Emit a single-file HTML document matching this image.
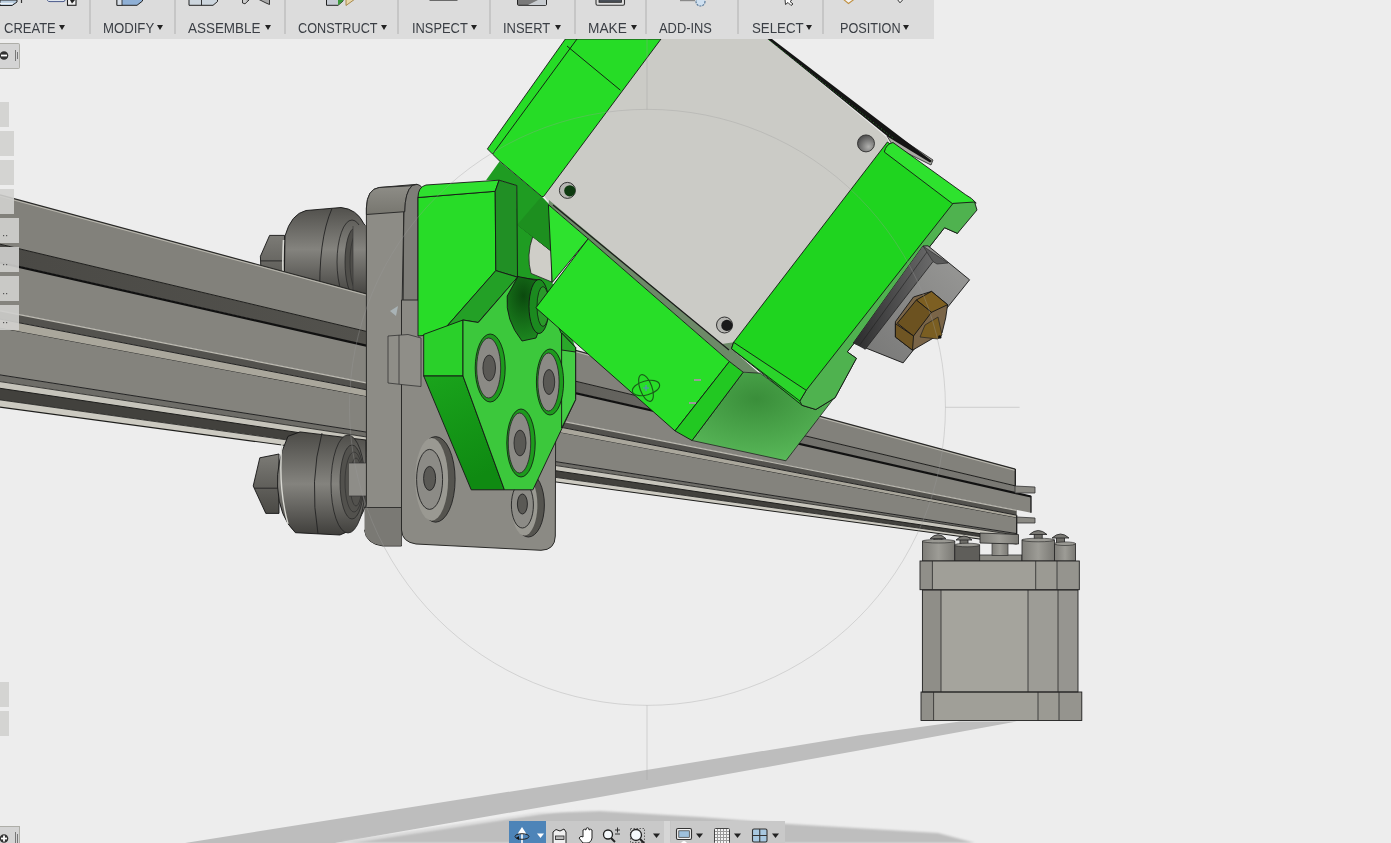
<!DOCTYPE html>
<html><head><meta charset="utf-8">
<style>
html,body{margin:0;padding:0;}
body{width:1391px;height:843px;overflow:hidden;background:#ededed;position:relative;font-family:"Liberation Sans",sans-serif;}
#scene{position:absolute;left:0;top:0;}
#tb{position:absolute;left:0;top:0;width:934px;height:39px;background:#dcdcdc;}
.sep{position:absolute;top:0;width:1.6px;height:34px;background:#c6c6c6;}
.lbl{position:absolute;top:20px;font-size:14px;line-height:16px;color:#3a3e44;white-space:nowrap;transform-origin:0 0;}
.tri{position:absolute;top:25px;width:0;height:0;border-left:3.5px solid transparent;border-right:3.5px solid transparent;border-top:5.5px solid #222;}
.pnl{position:absolute;left:0;background:rgba(208,208,206,0.9);}
</style></head><body>
<svg id="scene" width="1391" height="843" viewBox="0 0 1391 843">
<defs>
<linearGradient id="wg" x1="0" y1="0" x2="0" y2="1"><stop offset="0" stop-color="#5c5b57"/><stop offset="0.45" stop-color="#8a8984"/><stop offset="1" stop-color="#4e4d49"/></linearGradient>
<linearGradient id="wgt" gradientUnits="userSpaceOnUse" x1="0" y1="208" x2="0" y2="300"><stop offset="0" stop-color="#52514d"/><stop offset="0.45" stop-color="#84837e"/><stop offset="1" stop-color="#3e3d3a"/></linearGradient>
<linearGradient id="wgb" gradientUnits="userSpaceOnUse" x1="0" y1="432" x2="0" y2="536"><stop offset="0" stop-color="#4c4b47"/><stop offset="0.5" stop-color="#84837e"/><stop offset="1" stop-color="#3e3d3a"/></linearGradient>
<linearGradient id="slotg" gradientUnits="userSpaceOnUse" x1="0" y1="0" x2="1015" y2="0"><stop offset="0" stop-color="#4a4945"/><stop offset="0.45" stop-color="#55544f"/><stop offset="0.7" stop-color="#6d6c67"/><stop offset="1" stop-color="#7a7974"/></linearGradient>
<linearGradient id="ptop" x1="0" y1="0" x2="0" y2="1"><stop offset="0" stop-color="#8e8d87"/><stop offset="1" stop-color="#77766f"/></linearGradient>
<linearGradient id="sg" x1="0" y1="0" x2="1" y2="0"><stop offset="0" stop-color="#7e7d78"/><stop offset="0.5" stop-color="#9d9c96"/><stop offset="1" stop-color="#7a7974"/></linearGradient>
<linearGradient id="dsg" x1="0" y1="0" x2="0.3" y2="1"><stop offset="0" stop-color="#1aa41c"/><stop offset="1" stop-color="#0f8a12"/></linearGradient>
<linearGradient id="ng" x1="0" y1="0" x2="0" y2="1"><stop offset="0" stop-color="#7c7b76"/><stop offset="1" stop-color="#4a4945"/></linearGradient>
<radialGradient id="dg" cx="0.45" cy="0.3" r="0.75"><stop offset="0" stop-color="#3a8e3a"/><stop offset="1" stop-color="#5aba5a"/></radialGradient>
<linearGradient id="hg" x1="0" y1="0" x2="1" y2="0"><stop offset="0" stop-color="#2c2c2d"/><stop offset="1" stop-color="#6a6a6a"/></linearGradient>
<radialGradient id="bossg" cx="0.4" cy="0.3" r="0.8"><stop offset="0" stop-color="#0b4a0e"/><stop offset="1" stop-color="#1f8f22"/></radialGradient>
</defs>
<polygon points="185,843 488,795 600,777.6 860,735.2 960,721.6 1016.7,721.6 860,750.3 600,797 335,843" fill="#bdbdbd"/>
<defs><filter id="blur1" x="-5%" y="-50%" width="110%" height="200%"><feGaussianBlur stdDeviation="1.2"/></filter></defs>
<polygon points="335,843 450,826 540,813 600,811 700,817 785,823.7 938,833 975,843" fill="#bebebe" filter="url(#blur1)"/>
<line x1="344" y1="843" x2="575" y2="808" stroke="#ececec" stroke-width="2.2" stroke-opacity="0.8" filter="url(#blur1)"/>
<path d="M260.4,256.3 L269.6,235.4 L284.6,235.4 L284.6,300 L262,300 Z" fill="url(#ng)" stroke="#151515" stroke-width="0.9"/><line x1="261" y1="260.9" x2="284.6" y2="260.9" stroke="#222" stroke-width="0.9"/><path d="M285,236 Q291,214 306,210.5 L341,207.5 Q357,209 364,224 L366,226 L366,300 L284,300 Z" fill="url(#wgt)" stroke="#151515" stroke-width="0.9"/><path d="M283.5,240 Q282,270 284,300" fill="none" stroke="#d8d8d2" stroke-width="1.6"/><path d="M332,208.5 Q318,240 320,300" fill="none" stroke="#222" stroke-width="0.9"/><ellipse cx="352" cy="262" rx="15" ry="42" fill="url(#wgt)" stroke="#222" stroke-width="0.8"/><ellipse cx="355" cy="262" rx="10" ry="34" fill="#4f4e4a" stroke="#222" stroke-width="0.7"/><ellipse cx="357" cy="262" rx="7" ry="28" fill="none" stroke="#2a2a2a" stroke-width="0.6"/><rect x="353" y="225" width="13" height="75" fill="url(#wgt)"/><line x1="353" y1="226" x2="353" y2="300" stroke="#333" stroke-width="0.6"/>
<polygon points="0.0,194.9 1015.3,469.1 1015.3,485.9 0.0,244.2" fill="#82817b" />
<line x1="0.0" y1="194.9" x2="1015.3" y2="469.1" stroke="#2a2a28" stroke-width="1.2"/>
<line x1="0.0" y1="196.3" x2="1015.3" y2="470.5" stroke="#b9b7ae" stroke-width="1"/>
<polygon points="0.0,244.2 1015.3,485.9 1015.3,492.5 0.0,262.0" fill="url(#slotg)" />
<line x1="0.0" y1="244.2" x2="1015.3" y2="485.9" stroke="#1e1e1c" stroke-width="1"/>
<polygon points="0.0,262.0 1031.0,496.0 1031.0,512.7 0.0,310.3" fill="#85847e" />
<line x1="0.0" y1="262.5" x2="1031.0" y2="496.5" stroke="#111" stroke-width="2.2"/>
<polygon points="0.0,310.3 1016.7,509.9 1016.7,515.2 0.0,319.1" fill="#53524e" />
<line x1="0.0" y1="310.9" x2="1016.7" y2="510.5" stroke="#bdbbb2" stroke-width="1.2"/>
<polygon points="0.0,319.1 1016.7,515.2 1016.7,518.0 0.0,328.3" fill="#aaa79c" />
<line x1="0.0" y1="319.1" x2="1016.7" y2="515.2" stroke="#222" stroke-width="1"/>
<line x1="0.0" y1="328.3" x2="1016.7" y2="518.0" stroke="#2a2a28" stroke-width="1"/>
<polygon points="0.0,328.3 1016.7,518.0 1016.7,533.6 0.0,374.9" fill="#84837d" />
<polygon points="0.0,374.9 1016.7,533.6 1016.7,535.2 0.0,381.6" fill="#6e6d68" />
<line x1="0.0" y1="374.9" x2="1016.7" y2="533.6" stroke="#222" stroke-width="1"/>
<polygon points="0.0,381.6 1016.7,535.2 1016.7,539.1 0.0,388.3" fill="#c6c4bb" />
<line x1="0.0" y1="381.6" x2="1016.7" y2="535.2" stroke="#2a2a28" stroke-width="0.9"/>
<polygon points="0.0,388.3 1016.7,539.1 1016.7,541.7 0.0,399.9" fill="#42413d" />
<line x1="0.0" y1="388.3" x2="1016.7" y2="539.1" stroke="#1e1e1c" stroke-width="1"/>
<polygon points="0.0,399.9 1016.7,541.7 1016.7,544.0 0.0,407.1" fill="#cccac1" />
<line x1="0.0" y1="399.9" x2="1016.7" y2="541.7" stroke="#2a2a28" stroke-width="0.9"/>
<line x1="0.0" y1="407.1" x2="1016.7" y2="544.0" stroke="#1e1e1c" stroke-width="1.1"/>
<polygon points="1015.3,469.1 1015.3,485.9 1031.0,496.0 1031.0,512.7 1016.7,515.2 1016.7,544.0" fill="none" />
<line x1="1015.3" y1="469.1" x2="1015.3" y2="485.9" stroke="#1a1a1a" stroke-width="1.3"/>
<line x1="1031.0" y1="496.0" x2="1031.0" y2="512.7" stroke="#1a1a1a" stroke-width="1.3"/>
<line x1="1016.7" y1="515.2" x2="1016.7" y2="544.0" stroke="#1a1a1a" stroke-width="1.3"/>
<polygon points="1015.0,486.0 1035.0,487.0 1035.0,493.0 1015.0,493.0" fill="#8a8983" stroke="#333" stroke-width="0.8"/>
<polygon points="1017.0,517.0 1035.0,518.0 1035.0,523.0 1017.0,523.0" fill="#8a8983" stroke="#333" stroke-width="0.8"/>
<path d="M253.2,486 L259.8,457.8 L279,454 L279,513.4 L265.8,513.4 Z" fill="url(#ng)" stroke="#151515" stroke-width="0.9"/><line x1="254" y1="488.2" x2="279" y2="488.2" stroke="#222" stroke-width="0.9"/><path d="M288,436.3 Q276,462 277.6,487 Q279,517 295.4,532.7 L339.9,535 Q356,530 363,512 L366,505 L366,440 L300,431.9 Z" fill="url(#wgb)" stroke="#151515" stroke-width="0.9"/><path d="M282,444 Q278,487 288,524" fill="none" stroke="#d8d8d2" stroke-width="1.4"/><path d="M322,433 Q309,480 318,534" fill="none" stroke="#222" stroke-width="0.9"/><ellipse cx="348" cy="484" rx="17" ry="49" fill="url(#wgb)" stroke="#222" stroke-width="0.8"/><ellipse cx="352" cy="482" rx="12" ry="37" fill="#52514d" stroke="#222" stroke-width="0.7"/><ellipse cx="354" cy="482" rx="9" ry="30" fill="none" stroke="#2a2a2a" stroke-width="0.6"/><ellipse cx="356" cy="482" rx="6" ry="24" fill="none" stroke="#2a2a2a" stroke-width="0.6"/><rect x="349" y="463" width="17" height="33" fill="#8e8d88"/><line x1="349" y1="463" x2="366" y2="463" stroke="#333" stroke-width="0.7"/><line x1="349" y1="496" x2="366" y2="496" stroke="#333" stroke-width="0.7"/>
<path d="M366.4,530 L366.4,208 Q367,189 379.2,187.5 L417,184.3 L418,336 L401.5,336 L401.5,546 L383,546 Q366,544 364.5,530 Z" fill="#8d8c86" stroke="#2a2a28" stroke-width="1"/>
<path d="M366.4,214.5 L366.4,208 Q367,189 379.2,187.5 L412,185.7 Q405,192 404.8,211.7 Z" fill="url(#ptop)" stroke="#222" stroke-width="0.9"/>
<path d="M404.8,211.7 Q405,192 412,185.7 L417,184.3 Q421,185 422,188 L418,197.5 L418,336 L401.5,336 L403.8,212 Z" fill="#7e7d78" stroke="#222" stroke-width="0.9"/>
<line x1="403.8" y1="212" x2="401.5" y2="545" stroke="#2a2a28" stroke-width="0.9"/>
<path d="M364.5,507.5 L401.5,507.5 L401.5,545.5 L383,545.5 Q366,543.5 364.5,530 Z" fill="#7a7974"/>
<line x1="364" y1="507.5" x2="401.5" y2="507.5" stroke="#2a2a28" stroke-width="0.9"/>
<path d="M401.5,300 L556,300 L555.3,536 Q555,550 541,550.3 L416,544 Q402,542 401.5,530 Z" fill="#8b8a84" stroke="#2a2a28" stroke-width="1"/>
<polygon points="388,336 408,334.5 421,338 421,386.5 406,385 388,383" fill="#8f8e88" stroke="#333" stroke-width="0.8"/>
<line x1="399" y1="335" x2="399" y2="384" stroke="#333" stroke-width="0.8"/>
<polygon points="390,311 398,306 396,316" fill="#a9b3b6"/>
<ellipse cx="435.6" cy="479.4" rx="19.5" ry="42.8" fill="#55544f" stroke="#222" stroke-width="0.9"/><ellipse cx="431.6" cy="479.4" rx="16.5" ry="41.3" fill="#9a9992"/><ellipse cx="429.6" cy="479.4" rx="13.0" ry="30.0" fill="#8c8b86" stroke="#222" stroke-width="0.9"/><ellipse cx="429.6" cy="478.4" rx="6.0" ry="12.0" fill="#5a5955" stroke="#222" stroke-width="0.9"/>
<ellipse cx="528.4" cy="505.0" rx="16.0" ry="32.0" fill="#55544f" stroke="#222" stroke-width="0.9"/><ellipse cx="524.4" cy="505.0" rx="13.0" ry="30.5" fill="#9a9992"/><ellipse cx="522.4" cy="505.0" rx="11.0" ry="23.0" fill="#8c8b86" stroke="#222" stroke-width="0.9"/><ellipse cx="522.4" cy="504.0" rx="5.0" ry="10.0" fill="#5a5955" stroke="#222" stroke-width="0.9"/>
<polygon points="486.0,180.2 499.5,161.5 541.5,196.5 548.7,204.0 552.2,282.5 560.0,300.0 575.0,347.0 520.0,340.0 505.0,300.0 517.0,277.0 516.8,185.5 499.0,180.2" fill="#1f9c22" />
<path d="M532.8,236.4 L551.8,251.6 L551.8,282 L531,273.4 Q526,255 532.8,236.4 Z" fill="#cfcec8" stroke="#222" stroke-width="0.8"/>
<line x1="518" y1="225" x2="551.8" y2="251.6" stroke="#111" stroke-width="0.8"/>
<path d="M517,225 L551.8,251.6 L548.7,204 L541.5,196.5 Z" fill="#1d8f1f"/>
<path d="M655,39 L767.5,39 L884,135 Q892,142 886,149 L733.6,342.3 Q729,350 722,344 L555,206 Q541,198 545,190 Z" fill="#cbcbc6"/>
<polygon points="887.0,136.0 900.0,138.0 933.0,160.0 931.0,165.0 893.0,146.0" fill="#a9a9a3" stroke="#222" stroke-width="0.8"/>
<polygon points="767.5,39.0 772.0,39.0 932.0,161.0 930.0,162.5 889.0,137.5" fill="#141414" />
<line x1="769" y1="40" x2="893" y2="138" stroke="#2a8a2a" stroke-width="0.8" stroke-dasharray="1.2 2.2"/>
<circle cx="567.4" cy="190.4" r="8" fill="#b5b5b1" stroke="#222" stroke-width="0.9"/><circle cx="569.8" cy="190.8" r="5.6" fill="#0e3a10"/>
<defs><radialGradient id="hg2" cx="0.65" cy="0.7" r="0.7"><stop offset="0" stop-color="#b0b0ae"/><stop offset="1" stop-color="#505050"/></radialGradient></defs>
<circle cx="866" cy="143.4" r="8.5" fill="url(#hg2)" stroke="#222" stroke-width="0.8"/>
<circle cx="724.5" cy="325" r="8" fill="#b5b5b1" stroke="#222" stroke-width="0.9"/><circle cx="726.9" cy="325.4" r="5.6" fill="#1a1a1a"/>
<polygon points="549.0,200.0 722.0,344.0 733.6,342.3 731.5,348.7 760.3,374.3 743.2,372.2 729.4,361.5 588.2,238.8 548.4,204.7" fill="#6d8a68" />
<line x1="553" y1="205" x2="729" y2="350" stroke="#1a1a1a" stroke-width="1.2"/>
<polygon points="565.4,39.0 661.0,39.0 543.6,196.5 541.7,196.5 499.9,161.3 492.6,154.1 487.4,148.9" fill="#26dc26" stroke="#151515" stroke-width="0.9"/>
<polyline points="577,39 492.6,154.1" fill="none" stroke="#111" stroke-width="0.9"/>
<polyline points="567,46 571,49.4 620.4,90.2" fill="none" stroke="#111" stroke-width="0.9"/>
<polygon points="418.0,197.5 495.2,191.3 495.8,270.6 440.0,334.0 418.0,336.0" fill="#28dc28" stroke="#151515" stroke-width="0.9"/>
<path d="M418,197.5 Q418,187 426,185 L499.1,180.2 L495.2,191.3 Z" fill="#2fe02f" stroke="#151515" stroke-width="0.9"/>
<polygon points="499.1,180.2 516.8,185.5 517.5,277.2 495.8,270.6 495.2,191.3" fill="#218f25" stroke="#151515" stroke-width="0.9"/>
<polygon points="495.8,270.6 517.5,277.2 478.0,322.5 463.0,320.0 440.0,334.0" fill="#23a026" stroke="#151515" stroke-width="0.9"/>
<polygon points="423.7,334.4 463.0,320.0 463.0,376.0 423.7,376.0" fill="#2ad02a" stroke="#151515" stroke-width="0.9"/>
<polygon points="423.7,376.0 463.0,376.0 504.4,489.8 471.2,489.8" fill="url(#dsg)" stroke="#151515" stroke-width="0.9"/>
<polygon points="463.0,320.0 478.3,322.5 517.5,277.2 540.0,280.0 561.0,333.0 575.6,347.5 575.6,399.6 532.9,489.8 504.4,489.8 463.0,376.0" fill="#3cc83c" stroke="#151515" stroke-width="0.9"/>
<polygon points="561.6,333.0 575.6,347.5 575.6,399.6 561.6,428.0" fill="#44cc44" stroke="#151515" stroke-width="0.9"/>
<polygon points="561.6,333.0 575.6,347.5 575.6,352.0 561.6,350.0" fill="#2aa82a" stroke="#151515" stroke-width="0.9"/>
<path d="M518,276.5 L536.5,280.4 L548,306 L536,338 L522,341 Q505,320 507.2,296 Z" fill="url(#bossg)" stroke="#151515" stroke-width="0.9"/>
<ellipse cx="539" cy="306.5" rx="10" ry="27" fill="#1b8a1f" stroke="#151515" stroke-width="0.9"/>
<ellipse cx="543" cy="306.5" rx="6" ry="20" fill="#2a9a2a" stroke="#111" stroke-width="0.7"/>
<ellipse cx="490.2" cy="368.0" rx="15.0" ry="34.0" fill="#1d9a1d" stroke="#111" stroke-width="0.8"/><ellipse cx="488.7" cy="368.0" rx="12.0" ry="30.0" fill="#8b8a85" stroke="#222" stroke-width="0.8"/><ellipse cx="489.2" cy="368.0" rx="6.3" ry="12.9" fill="#5a5955" stroke="#222" stroke-width="0.8"/>
<ellipse cx="550.0" cy="382.0" rx="13.6" ry="33.0" fill="#1d9a1d" stroke="#111" stroke-width="0.8"/><ellipse cx="548.5" cy="382.0" rx="10.6" ry="29.0" fill="#8b8a85" stroke="#222" stroke-width="0.8"/><ellipse cx="549.0" cy="382.0" rx="5.7" ry="12.5" fill="#5a5955" stroke="#222" stroke-width="0.8"/>
<ellipse cx="521.0" cy="443.0" rx="14.2" ry="34.0" fill="#1d9a1d" stroke="#111" stroke-width="0.8"/><ellipse cx="519.5" cy="443.0" rx="11.2" ry="30.0" fill="#8b8a85" stroke="#222" stroke-width="0.8"/><ellipse cx="520.0" cy="443.0" rx="6.0" ry="12.9" fill="#5a5955" stroke="#222" stroke-width="0.8"/>
<polygon points="588.2,238.8 535.9,307.8 550.0,290.0" fill="#1a4a1a" />
<polygon points="548.4,204.7 588.2,238.8 552.2,282.5" fill="#2ee22e" stroke="#151515" stroke-width="0.9"/>
<polygon points="743.2,372.2 760.3,373.2 800.9,403.1 816.9,408.5 835.0,396.7 785.9,460.8 692.0,440.5" fill="url(#dg)" stroke="#222" stroke-width="0.8"/>
<polygon points="588.2,238.8 729.4,361.5 675.0,430.9 535.9,307.8" fill="#28de28" stroke="#151515" stroke-width="0.9"/>
<polygon points="729.4,361.5 743.2,372.2 692.0,440.5 675.0,430.9" fill="#22c822" stroke="#151515" stroke-width="0.9"/>
<polygon points="887.4,142.0 974.6,202.0 957.4,233.4 944.5,227.7 847.3,351.9 856.4,358.3 835.0,397.8 815.8,409.5 802.0,405.3 731.5,348.7 733.6,342.3" fill="#1fd41f" stroke="#151515" stroke-width="0.9"/>
<path d="M884.3,152 Q886,144 893,142.5 L965.3,194.5 Q972,198 976.2,203 L953.2,204.2 Z" fill="#2ee22e" stroke="#151515" stroke-width="0.9"/>
<polygon points="953.0,203.4 974.6,202.0 977.0,210.0 957.4,233.4 944.5,227.7 847.3,351.9 856.4,358.3 835.0,397.8 815.8,409.5 802.0,405.3 799.8,401.0 806.2,390.3" fill="#4fb24f" stroke="#151515" stroke-width="0.9"/>
<polygon points="731.5,348.7 733.6,342.3 806.2,390.3 799.8,401.0" fill="#2bd42b" stroke="#151515" stroke-width="0.9"/>
<defs><linearGradient id="hf" x1="1" y1="0" x2="0" y2="1"><stop offset="0" stop-color="#9a9a98"/><stop offset="1" stop-color="#767675"/></linearGradient></defs>
<polygon points="923.0,246.0 928.0,245.8 969.6,279.8 903.1,362.9 853.3,343.0" fill="url(#hf)" stroke="#151515" stroke-width="0.9"/>
<polygon points="923.0,246.0 933.0,261.6 865.0,349.6 853.3,343.0" fill="url(#hg)" />
<line x1="933" y1="261.6" x2="865" y2="349.6" stroke="#222" stroke-width="0.8"/>
<line x1="927" y1="252" x2="859" y2="346" stroke="#222" stroke-width="0.6"/>
<polygon points="923.0,246.0 944.7,260.7 948.0,263.0 937.0,264.0 933.0,261.6" fill="#5a5a5a" stroke="#222" stroke-width="0.6"/>
<polygon points="895.4,321.7 913.5,297.0 931.5,291.4 947.6,304.7 945.7,318.0 942.0,333.0 912.5,350.2 895.4,337.0" fill="#7a6548" stroke="#151515" stroke-width="0.9"/>
<polygon points="916.3,300.0 931.5,291.4 947.6,304.7 931.5,312.3" fill="#7d5f22" stroke="#151515" stroke-width="0.9"/>
<polygon points="897.3,323.2 916.3,300.0 931.5,312.3 913.5,336.0" fill="#6c5220" stroke="#151515" stroke-width="0.9"/>
<polygon points="895.4,323.6 913.5,336.0 912.5,350.2 895.4,337.0" fill="#6f5523" stroke="#151515" stroke-width="0.9"/>
<polygon points="920.0,337.0 925.0,325.0 938.0,317.0 942.0,335.0 938.0,339.0" fill="#7a5e22" stroke="#222" stroke-width="0.7"/>
<circle cx="939.8" cy="337" r="1.8" fill="#111"/>
<rect x="964.8" y="555" width="57" height="6" fill="#8d8c86" stroke="#333" stroke-width="0.8"/>
<rect x="992" y="543" width="16" height="12.5" fill="url(#sg)" stroke="#333" stroke-width="0.7"/>
<path d="M980,533 L1018.5,534.5 L1018.5,544 L980,543 Z" fill="url(#sg)" stroke="#222" stroke-width="0.8"/>
<rect x="934.0" y="536.7" width="8.0" height="5.5" fill="#6e6d68" stroke="#222" stroke-width="0.8"/><path d="M930.0,538.7 Q938.0,530.7 946.0,538.7 Z" fill="#7a7974" stroke="#222" stroke-width="0.8"/><rect x="922.4" y="541.2" width="32.4" height="19.8" fill="url(#sg)" stroke="#222" stroke-width="0.8"/><ellipse cx="938.6" cy="541.2" rx="16.2" ry="1.8" fill="#9a9993" stroke="#222" stroke-width="0.6"/>
<rect x="960.0" y="538.0" width="8.0" height="8.0" fill="#6e6d68" stroke="#222" stroke-width="0.8"/><path d="M956.0,540.0 Q964.0,532.0 972.0,540.0 Z" fill="#7a7974" stroke="#222" stroke-width="0.8"/><rect x="954.8" y="545.0" width="24.9" height="16.0" fill="#5f5e5a" stroke="#222" stroke-width="0.8"/><ellipse cx="967.2" cy="545.0" rx="12.5" ry="1.8" fill="#9a9993" stroke="#222" stroke-width="0.6"/>
<rect x="1034.2" y="532.5" width="8.0" height="8.5" fill="#6e6d68" stroke="#222" stroke-width="0.8"/><path d="M1029.5,534.5 Q1038.2,526.5 1047.0,534.5 Z" fill="#7a7974" stroke="#222" stroke-width="0.8"/><rect x="1022.0" y="540.0" width="32.4" height="21.0" fill="url(#sg)" stroke="#222" stroke-width="0.8"/><ellipse cx="1038.2" cy="540.0" rx="16.2" ry="1.8" fill="#9a9993" stroke="#222" stroke-width="0.6"/>
<rect x="1056.5" y="536.0" width="8.0" height="8.7" fill="#6e6d68" stroke="#222" stroke-width="0.8"/><path d="M1052.0,538.0 Q1060.5,530.0 1069.0,538.0 Z" fill="#7a7974" stroke="#222" stroke-width="0.8"/><rect x="1054.4" y="543.7" width="21.2" height="17.3" fill="url(#sg)" stroke="#222" stroke-width="0.8"/><ellipse cx="1065.0" cy="543.7" rx="10.6" ry="1.8" fill="#9a9993" stroke="#222" stroke-width="0.6"/>
<polygon points="920.0,561.0 1079.3,561.0 1079.3,589.7 920.0,589.7" fill="#a09f98" />
<polygon points="920.0,561.0 932.4,561.0 932.4,589.7 920.0,589.7" fill="#908f89" />
<polygon points="1035.7,561.0 1057.0,561.0 1057.0,589.7 1035.7,589.7" fill="#9b9a93" />
<polygon points="1057.0,561.0 1079.3,561.0 1079.3,589.7 1057.0,589.7" fill="#95948e" />
<polygon points="922.4,590.0 1078.0,590.0 1078.0,692.0 922.4,692.0" fill="#a5a49d" />
<polygon points="922.4,590.0 941.0,590.0 941.0,692.0 922.4,692.0" fill="#8f8e88" />
<polygon points="1028.0,590.0 1058.0,590.0 1058.0,692.0 1028.0,692.0" fill="#9d9c96" />
<polygon points="1058.0,590.0 1078.0,590.0 1078.0,692.0 1058.0,692.0" fill="#969590" />
<polygon points="921.0,692.0 1081.8,692.0 1081.8,720.5 921.0,720.5" fill="#a09f98" />
<polygon points="921.0,692.0 933.6,692.0 933.6,720.5 921.0,720.5" fill="#908f89" />
<polygon points="1038.0,692.0 1059.0,692.0 1059.0,720.5 1038.0,720.5" fill="#9b9a93" />
<polygon points="1059.0,692.0 1081.8,692.0 1081.8,720.5 1059.0,720.5" fill="#95948e" />
<rect x="920" y="561" width="159.3" height="28.7" fill="none" stroke="#222" stroke-width="0.9"/>
<rect x="922.4" y="590" width="155.6" height="102" fill="none" stroke="#222" stroke-width="0.9"/>
<rect x="921" y="692" width="160.8" height="28.5" fill="none" stroke="#222" stroke-width="0.9"/>
<line x1="932.4" y1="561" x2="932.4" y2="589.7" stroke="#2a2a2a" stroke-width="0.8"/>
<line x1="1035.7" y1="561" x2="1035.7" y2="589.7" stroke="#2a2a2a" stroke-width="0.8"/>
<line x1="1057.0" y1="561" x2="1057.0" y2="589.7" stroke="#2a2a2a" stroke-width="0.8"/>
<line x1="941.0" y1="590" x2="941.0" y2="692" stroke="#2a2a2a" stroke-width="0.8"/>
<line x1="1028.0" y1="590" x2="1028.0" y2="692" stroke="#2a2a2a" stroke-width="0.8"/>
<line x1="1058.0" y1="590" x2="1058.0" y2="692" stroke="#2a2a2a" stroke-width="0.8"/>
<line x1="933.6" y1="692" x2="933.6" y2="720.5" stroke="#2a2a2a" stroke-width="0.8"/>
<line x1="1038.0" y1="692" x2="1038.0" y2="720.5" stroke="#2a2a2a" stroke-width="0.8"/>
<line x1="1059.0" y1="692" x2="1059.0" y2="720.5" stroke="#2a2a2a" stroke-width="0.8"/>
<circle cx="647.45" cy="407.35" r="298" fill="none" stroke="#9a9a9a" stroke-opacity="0.33" stroke-width="1"/>
<line x1="647" y1="39" x2="647" y2="109.4" stroke="#9a9a9a" stroke-opacity="0.3" stroke-width="1.2"/>
<line x1="647" y1="705.3" x2="647" y2="780" stroke="#9a9a9a" stroke-opacity="0.3" stroke-width="1.2"/>
<line x1="945.4" y1="407.4" x2="1019.6" y2="407.4" stroke="#9a9a9a" stroke-opacity="0.3" stroke-width="1.2"/>
<g fill="none" stroke="#1a5a1a" stroke-width="1.1"><ellipse cx="646" cy="388" rx="14" ry="7" transform="rotate(-15 646 388)"/><ellipse cx="646" cy="388" rx="6" ry="14" transform="rotate(-20 646 388)"/></g>
<path d="M643,388 h6 M646,385 v6" stroke="#5a8ac0" stroke-width="1.2"/>
<path d="M694,380 h7 M689,403 h7" stroke="#9a9a9a" stroke-width="2"/>
</svg>
<div id="tb">
<div class="sep" style="left:89.0px"></div>
<div class="sep" style="left:174.2px"></div>
<div class="sep" style="left:284.1px"></div>
<div class="sep" style="left:397.2px"></div>
<div class="sep" style="left:489.0px"></div>
<div class="sep" style="left:574.2px"></div>
<div class="sep" style="left:645.0px"></div>
<div class="sep" style="left:737.0px"></div>
<div class="sep" style="left:822.2px"></div>
<div class="lbl" style="left:3.5px;transform:scaleX(0.929)">CREATE</div>
<div class="tri" style="left:58.9px"></div>
<div class="lbl" style="left:103.4px;transform:scaleX(0.940)">MODIFY</div>
<div class="tri" style="left:156.8px"></div>
<div class="lbl" style="left:188.4px;transform:scaleX(0.960)">ASSEMBLE</div>
<div class="tri" style="left:265.0px"></div>
<div class="lbl" style="left:298.3px;transform:scaleX(0.905)">CONSTRUCT</div>
<div class="tri" style="left:381.0px"></div>
<div class="lbl" style="left:411.8px;transform:scaleX(0.919)">INSPECT</div>
<div class="tri" style="left:471.3px"></div>
<div class="lbl" style="left:503.2px;transform:scaleX(0.925)">INSERT</div>
<div class="tri" style="left:554.8px"></div>
<div class="lbl" style="left:588.1px;transform:scaleX(0.977)">MAKE</div>
<div class="tri" style="left:631.0px"></div>
<div class="lbl" style="left:659.2px;transform:scaleX(0.920)">ADD-INS</div>
<div class="lbl" style="left:751.6px;transform:scaleX(0.949)">SELECT</div>
<div class="tri" style="left:806.0px"></div>
<div class="lbl" style="left:839.5px;transform:scaleX(0.905)">POSITION</div>
<div class="tri" style="left:903.0px"></div>
<svg style="position:absolute;left:0;top:0" width="934" height="39" viewBox="0 0 934 39">
<path d="M0,0 H17 V2 L12,5.5 H0 Z" fill="#b9cde0" stroke="#222" stroke-width="1"/>
<path d="M0,3.5 H13" stroke="#eef2f6" stroke-width="1.4"/>
<line x1="21.5" y1="0" x2="21.5" y2="3" stroke="#333" stroke-width="1.2"/>
<path d="M47.5,-1 V0.5 Q48,1.6 50,1.6 H63 Q65,1.6 65,0 V-1" fill="#dfe6ee" stroke="#4a5a8a" stroke-width="1"/>
<rect x="67.5" y="-1" width="8.5" height="6.3" fill="#f2f2f2" stroke="#222" stroke-width="1.1"/>
<path d="M70,0 L75,0 L72,3.5 Z" fill="#222"/>
<path d="M117,-1 V5.3 H137 L142.5,1 V-1 Z" fill="#8fb0d6" stroke="#222" stroke-width="1"/>
<rect x="117" y="-1" width="5" height="6.3" fill="#d8dfe8" stroke="#222" stroke-width="0.8"/>
<path d="M189,-1 V5.3 H213 L217.5,1.5 V-1 Z" fill="#cdd6de" stroke="#222" stroke-width="1"/>
<line x1="201.5" y1="0" x2="201.5" y2="5.3" stroke="#222" stroke-width="0.9"/>
<path d="M242.5,-1 V3 L245,3.8 L249,0 Z" fill="#ccc" stroke="#222" stroke-width="0.9"/>
<path d="M258,-1 L266,3 L269.5,4.5 L269.5,-1 Z" fill="#aaa" stroke="#222" stroke-width="0.9"/>
<path d="M326.5,-1 V5.3 H338 L343,1 V-1 Z" fill="#c7ccd4" stroke="#222" stroke-width="1"/>
<path d="M338,5.3 L343,1 V-1 H338 Z" fill="#3a9a3a"/>
<path d="M346,-1 V5.5 L355,-1 Z" fill="#e8d6a8" stroke="#a08040" stroke-width="0.9"/>
<rect x="429.5" y="-1" width="28" height="2" fill="#6a6a6a"/>
<rect x="517.5" y="-1" width="29" height="6.3" rx="1" fill="#7a7a7a" stroke="#222" stroke-width="1"/>
<path d="M528,5 L540,-1 H546 V5 Z" fill="#c8ccd0"/>
<rect x="596" y="-2" width="28.5" height="7.3" rx="1.5" fill="#e0e0e0" stroke="#333" stroke-width="1.1"/>
<rect x="599" y="-2" width="22.5" height="4.3" fill="#4a5058" stroke="#222" stroke-width="0.8"/>
<rect x="680" y="-1" width="15" height="2.2" fill="#8a8a8a"/>
<circle cx="700.5" cy="1.5" r="4.5" fill="#cfe0f0" stroke="#5a7a9a" stroke-width="1.2" stroke-dasharray="2 1"/>
<path d="M785,-1 L785.5,4.5 L788,2.5 L791,5.5 L793,4 L790,1.5 L793,-1 Z" fill="#fff" stroke="#222" stroke-width="0.9"/>
<path d="M843,-1 L848.5,3.5 L854.5,-1" fill="#f4f4f4" stroke="#c09040" stroke-width="1.1"/>
<path d="M897,-1 L900,2.8 L903.5,-1" fill="#f4f4f4" stroke="#333" stroke-width="1"/>
</svg>
</div>
<div style="position:absolute;left:0;top:43px;width:19px;height:24px;background:#d4d4d4;border:1px solid #aeaea8;border-left:none;border-radius:0 2px 2px 0;"></div>
<div class="pnl" style="top:102px;width:9px;height:25px;"></div>
<div class="pnl" style="top:131px;width:14px;height:25px;"></div>
<div class="pnl" style="top:160px;width:14px;height:25px;"></div>
<div class="pnl" style="top:189px;width:14px;height:25px;"></div>
<div class="pnl" style="top:218px;width:19px;height:25px;"></div>
<div class="pnl" style="top:247px;width:19px;height:25px;"></div>
<div class="pnl" style="top:276px;width:19px;height:25px;"></div>
<div class="pnl" style="top:305px;width:19px;height:25px;"></div>
<div class="pnl" style="top:682px;width:9px;height:25px;"></div>
<div class="pnl" style="top:711px;width:9px;height:25px;"></div>
<div style="position:absolute;left:0;top:826px;width:19px;height:20px;background:#d4d4d4;border:1px solid #aeaea8;border-left:none;"></div>
<svg style="position:absolute;left:0;top:0" width="1391" height="843" viewBox="0 0 1391 843">
<circle cx="4" cy="55.5" r="4.3" fill="#333"/><rect x="1" y="54.6" width="6" height="1.8" fill="#fff"/>
<line x1="15.5" y1="50" x2="15.5" y2="61" stroke="#777" stroke-width="1"/><line x1="17.5" y1="52" x2="17.5" y2="59" stroke="#777" stroke-width="1"/>
<circle cx="4" cy="838.5" r="4.3" fill="#333"/><rect x="1" y="837.6" width="6" height="1.8" fill="#fff"/><rect x="3.1" y="835.5" width="1.8" height="6" fill="#fff"/>
<line x1="15.5" y1="832" x2="15.5" y2="843" stroke="#777" stroke-width="1"/><line x1="17.5" y1="834" x2="17.5" y2="843" stroke="#777" stroke-width="1"/>
<g fill="#555">
<rect x="3" y="235" width="1.2" height="1.2"/><rect x="6" y="235" width="1.2" height="1.2"/>
<rect x="3" y="264" width="1.2" height="1.2"/><rect x="6" y="264" width="1.2" height="1.2"/>
<rect x="3" y="293" width="1.2" height="1.2"/><rect x="6" y="293" width="1.2" height="1.2"/>
<rect x="3" y="322" width="1.2" height="1.2"/><rect x="6" y="322" width="1.2" height="1.2"/>
</g>
<rect x="509" y="821" width="155" height="22" fill="#c9c9c9"/>
<rect x="509" y="821" width="37" height="22" fill="#4d84b8"/>
<rect x="664" y="821" width="6" height="22" fill="#d6d6d6"/>
<rect x="670.5" y="821" width="114.5" height="22" fill="#c9c9c9"/>
<g stroke="#fff" stroke-width="1.6" fill="none"><line x1="522" y1="830" x2="522" y2="843"/><path d="M518.5,834 L522,828.5 L525.5,834" fill="#fff"/></g>
<ellipse cx="522" cy="836.5" rx="7" ry="2.8" fill="none" stroke="#222" stroke-width="1"/>
<path d="M516,838 L519,836 L519,840 Z" fill="#111"/>
<path d="M537,833.5 H544 L540.5,838 Z" fill="#fff"/>
<path d="M553,843 V832 L556,829.5 L560,831 L564,829 L566,832 V843" fill="#f0f0f0" stroke="#222" stroke-width="1"/>
<rect x="555.5" y="836" width="8.5" height="3.5" fill="#bbb" stroke="#222" stroke-width="0.8"/>
<path d="M579,838 Q581,835 583,837 V830 Q584.5,828.5 586,830 V828.5 Q587.5,827 589,828.5 V830 Q590.5,828.5 592,830 V838 Q591,843 587,843 H583 Z" fill="#fff" stroke="#222" stroke-width="1"/>
<circle cx="608" cy="834.5" r="4.5" fill="#f4f8fb" stroke="#222" stroke-width="1.3"/><line x1="611" y1="838" x2="615" y2="842" stroke="#222" stroke-width="2"/>
<path d="M615,830 H620 M617.5,827.5 V832.5 M615,834 H620" stroke="#222" stroke-width="0.9"/>
<circle cx="636" cy="835" r="5.5" fill="#f4f8fb" stroke="#222" stroke-width="1.3"/><line x1="640" y1="839" x2="644" y2="843" stroke="#222" stroke-width="2"/>
<rect x="630.5" y="828.5" width="14" height="14" fill="none" stroke="#444" stroke-width="0.8" stroke-dasharray="1.5 1.5"/>
<path d="M653,833.5 H660 L656.5,838 Z" fill="#222"/>
<rect x="676.5" y="828.5" width="15" height="11" rx="1.5" fill="#f2f2f2" stroke="#333" stroke-width="1.1"/>
<rect x="678.8" y="830.8" width="10.5" height="6.5" fill="#9ec0dc" stroke="#333" stroke-width="0.7"/>
<path d="M681,843 Q684,839 687,843" fill="#fff"/>
<path d="M696,833.5 H703 L699.5,838 Z" fill="#222"/>
<rect x="714.5" y="828.5" width="15" height="15" rx="1" fill="#f4f4f4" stroke="#444" stroke-width="1"/>
<path d="M717.5,829 V843 M720.5,829 V843 M723.5,829 V843 M726.5,829 V843 M715,831.5 H729 M715,834.5 H729 M715,837.5 H729 M715,840.5 H729" stroke="#9a9a9a" stroke-width="1"/>
<path d="M734,833.5 H741 L737.5,838 Z" fill="#222"/>
<rect x="752.5" y="829" width="14.5" height="13" rx="1.5" fill="#a8c8e0" stroke="#333" stroke-width="1.1"/>
<path d="M759.75,829 V842 M752.5,835.5 H767" stroke="#333" stroke-width="1.1"/>
<path d="M772,833.5 H779 L775.5,838 Z" fill="#222"/>
</svg>
</body></html>
